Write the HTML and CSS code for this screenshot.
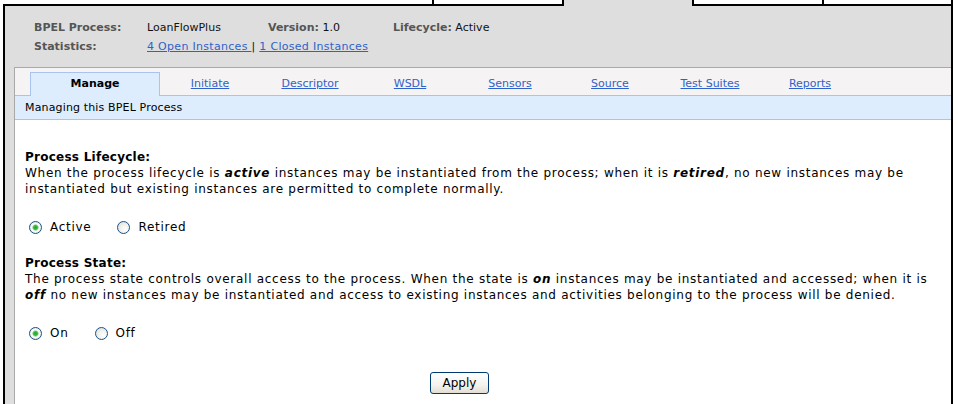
FILE: index.html
```html
<!DOCTYPE html>
<html>
<head>
<meta charset="utf-8">
<title>Manage BPEL Process</title>
<link rel="stylesheet" href="styles.css">
</head>
<body>
<div class="strip">
  <div class="strip-gap"></div>
  <div class="stab"></div>
  <div class="stab sel"></div>
  <div class="stab"></div>
  <div class="stab last"></div>
</div>
<div class="panel">
  <div class="info">
    <span class="lbl">BPEL Process:</span>
    <span>LoanFlowPlus</span>
    <span><b class="lbl">Version:</b> 1.0</span>
    <span><b class="lbl">Lifecycle:</b> Active</span>
    <span class="lbl">Statistics:</span>
    <span class="stats"><a href="#">4 Open Instances </a> | <a href="#">1 Closed Instances</a></span>
  </div>
  <div class="box">
    <div class="tabs">
      <div class="tab active">Manage</div>
      <a class="tab" href="#">Initiate</a>
      <a class="tab" href="#">Descriptor</a>
      <a class="tab" href="#">WSDL</a>
      <a class="tab" href="#">Sensors</a>
      <a class="tab" href="#">Source</a>
      <a class="tab" href="#">Test Suites</a>
      <a class="tab" href="#">Reports</a>
    </div>
    <div class="subbar">Managing this BPEL Process</div>
    <div class="content">
      <div class="heading">Process Lifecycle:</div>
      <div class="para">When the process lifecycle is <b><i>active</i></b> instances may be instantiated from the process; when it is <b><i>retired</i></b>, no new instances may be instantiated but existing instances are permitted to complete normally.</div>
      <div class="radios">
        <label class="opt"><input type="radio" name="life" checked><span>Active</span></label>
        <label class="opt"><input type="radio" name="life"><span>Retired</span></label>
      </div>
      <div class="heading h2">Process State:</div>
      <div class="para">The process state controls overall access to the process. When the state is <b><i>on</i></b> instances may be instantiated and accessed; when it is <b><i>off</i></b> no new instances may be instantiated and access to existing instances and activities belonging to the process will be denied.</div>
      <div class="radios">
        <label class="opt"><input type="radio" name="state" checked><span>On</span></label>
        <label class="opt"><input type="radio" name="state"><span>Off</span></label>
      </div>
      <div class="actions"><button class="btn" type="button">Apply</button></div>
    </div>
  </div>
</div>
</body>
</html>
```

FILE: styles.css
```css
* { box-sizing: border-box; }
html, body { margin: 0; padding: 0; background: #fff; }
body {
  font-family: "DejaVu Sans", Verdana, sans-serif;
  font-size: 11px;
  color: #000;
  width: 958px;
  height: 404px;
  overflow: hidden;
}
a { color: #2f62c9; text-decoration: underline; }

.strip { display: flex; height: 6px; }
.strip-gap { margin-left: 3px; width: 429px; height: 6px; border-bottom: 2px solid #000; }
.stab { width: 130px; height: 6px; background: #fff; border-left: 2px solid #000; border-bottom: 2px solid #000; }
.stab.sel { background: #dedede; border-bottom: none; }
.stab.last { width: 131px; border-right: 2px solid #000; }

.panel {
  margin-left: 3px;
  width: 950px;
  height: 398px;
  background: #dedede;
  border-left: 2px solid #000;
  border-right: 2px solid #000;
  overflow: hidden;
}
.info {
  display: grid;
  grid-template-columns: 113px 121px 125px auto;
  line-height: 19px;
  padding: 12px 0 0 29px;
  color: #111;
}
.lbl { font-weight: bold; color: #555; }
.stats { grid-column: 2 / span 3; letter-spacing: 0.3px; }

.box {
  margin: 11px 0 0 9px;
  background: #fff;
  border-left: 1px solid #a9a9a9;
  border-top: 1px solid #a9a9a9;
  height: 345px;
}
.tabs {
  display: flex;
  align-items: flex-end;
  height: 28px;
  padding-left: 15px;
  background: #f5f3f3;
  border-bottom: 1px solid #a7c3ef;
}
.tab {
  width: 100px;
  height: 23px;
  line-height: 23px;
  text-align: center;
}
.tab.active {
  width: 130px;
  height: 24px;
  margin-bottom: -1px;
  line-height: 22px;
  font-weight: bold;
  background: #ddedfd;
  border: 1px solid #a7c3ef;
  border-bottom: none;
  color: #000;
}
.subbar {
  height: 24px;
  line-height: 23px;
  padding-left: 10px;
  background: #ddedfd;
  border-bottom: 1px solid #a7c3ef;
  letter-spacing: 0.15px;
}
.content { padding: 29px 0 0 10px; }
.heading { font-weight: bold; line-height: 16px; font-size: 12px; letter-spacing: 0.25px; }
.heading.h2 { margin-top: 19px; }
.para { line-height: 16px; font-size: 12px; letter-spacing: 0.72px; padding-right: 4px; }
.radios {
  display: flex;
  align-items: center;
  height: 18px;
  margin-top: 21px;
  padding-left: 4px;
  font-size: 12px;
  letter-spacing: 0.72px;
}
.opt { display: flex; align-items: center; margin-right: 26px; }
.opt input {
  appearance: none;
  -webkit-appearance: none;
  width: 13px;
  height: 13px;
  margin: 0 8px 0 0;
  border: 1px solid #1c5180;
  border-radius: 50%;
  background: radial-gradient(circle at 65% 65%, #fff 0%, #f3f3ef 40%, #d8d8d0 100%);
}
.opt input:checked {
  background: radial-gradient(circle, #22a22a 0, #3fbb3f 2px, #b5e3b5 3px, #fff 3.5px, #f3f3ef 60%, #d8d8d0 100%);
}
.actions { margin-top: 30px; padding-left: 405px; }
.btn {
  width: 59px;
  height: 22px;
  padding: 0;
  font-family: "DejaVu Sans", Verdana, sans-serif;
  font-size: 12px;
  color: #000;
  border: 1px solid #003c74;
  border-radius: 3px;
  background: linear-gradient(#ffffff, #f4f3ee 60%, #e2ded3);
}
```
